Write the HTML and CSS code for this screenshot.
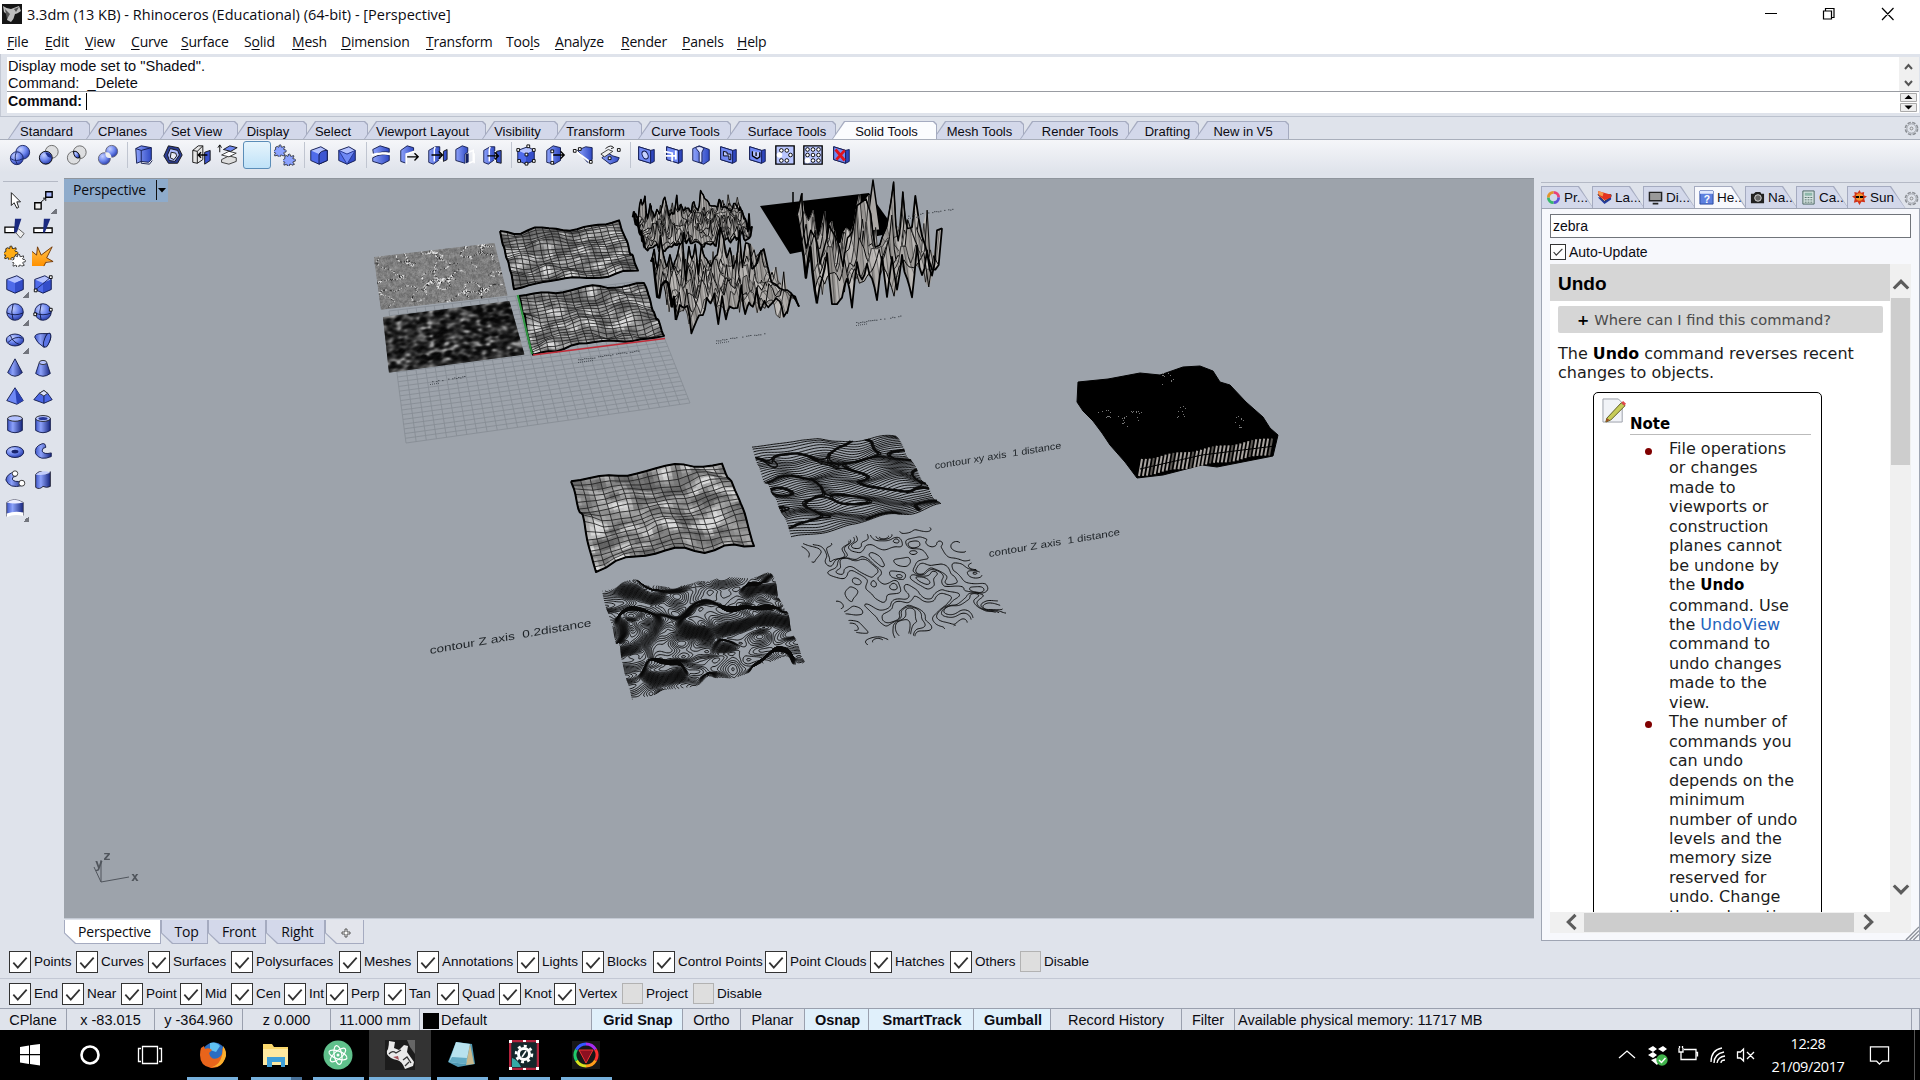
FILE: index.html
```html
<!DOCTYPE html>
<html lang="en">
<head>
<meta charset="utf-8">
<title>3.3dm (13 KB) - Rhinoceros (Educational) (64-bit) - [Perspective]</title>
<link rel="stylesheet" href="styles.css">
</head>
<body>
<svg class="sprite" aria-hidden="true">
  <defs>
    <radialGradient id="ball" cx=".35" cy=".3" r=".8"><stop offset="0" stop-color="#c3cfff"/><stop offset=".5" stop-color="#6d86ee"/><stop offset="1" stop-color="#1c2f9c"/></radialGradient>
    <linearGradient id="blue"><stop offset="0" stop-color="#8ea3fb"/><stop offset="1" stop-color="#2f49c4"/></linearGradient>
    <linearGradient id="tube"><stop offset="0" stop-color="#4058c8"/><stop offset=".35" stop-color="#8da2fa"/><stop offset="1" stop-color="#17267f"/></linearGradient>
    <linearGradient id="fire" x2="0" y2="1"><stop offset="0" stop-color="#ffc04a"/><stop offset="1" stop-color="#ff9100"/></linearGradient>
  </defs>
  <symbol id="cube" viewBox="0 0 24 24"><path d="M3 7 14 3l7 4v11l-9 4-9-4z" fill="#4f6bea"/><path d="M3 7 14 3l7 4-9 4z" fill="#b4c2ff"/><path d="M12 11v11l9-4V7z" fill="#344dc9"/><path d="M3 7 14 3l7 4v11l-9 4-9-4z" fill="none" stroke="#111a4a"/></symbol>
  <symbol id="plate" viewBox="0 0 24 24"><path d="M4 3l13 4 4-1v13l-4 2-13-4z" fill="#2e46bd" stroke="#10194f"/><path d="M4 3l13 4v14L4 17z" fill="#7189f3" stroke="#10194f"/></symbol>
  <symbol id="puzzle" viewBox="0 0 16 16"><path d="M2 4q2-2 4 0 1-1 0-2 2-2 3 0-1 2 1 2l3-1q1 2-1 3 0 2 2 1 2 1 1 3-2 0-3 1l2 3-3 1q-1-2-3-1-1 1 0 2-2 2-3 0 1-2-1-2l-3 1q-1-2 1-3 0-2-2-1-2-1-1-3 2 0 3-1z" stroke="#111" stroke-width=".9"/></symbol>
  <symbol id="box-slot" viewBox="0 0 24 24"><path d="M3 7l7-4h5v14l-7 5-5-2z" fill="url(#blue)" stroke="#111a4a"/><path d="M10 3l-1 3v13M15 8l5 2v9l-6-2" fill="none" stroke="#fff" stroke-width="1.6"/></symbol>
  <symbol id="arrow" viewBox="0 0 24 24"><path d="M10 12h12M18 8l4 4-4 4" fill="none" stroke="#000" stroke-width="1.5"/></symbol>
  <symbol id="gear" viewBox="0 0 16 16"><circle cx="8" cy="8" r="6.5" fill="none" stroke="#8c9096" stroke-width="1.7" stroke-dasharray="3.6 1.5"/><circle cx="8" cy="8" r="5" fill="none" stroke="#999da3"/><circle cx="8" cy="8" r="1.5" fill="none" stroke="#888"/></symbol>
</svg>

<header class="titlebar">
  <svg class="app-icon" viewBox="0 0 20 20"><rect width="20" height="20" fill="#151515"/><path d="M1 2q4 3 8 3l8-3 2 5q-4 3-6 3-1 5-4 8l-4-2 1-5-4-3z" fill="#bdbdbd"/><path d="M3 5l5 5-3 5zM12 5l5-2-3 5z" fill="#555"/></svg>
  <h1>3.3dm (13 KB) - Rhinoceros (Educational) (64-bit) - [Perspective]</h1>
  <svg class="window-controls" viewBox="0 0 150 28"><path d="M5 13.500h12M63.500 11h8v8h-8zM65.500 11V8.500h8.500v9h-2.500M122 8l11.500 12M133.500 8L122 20" fill="none" stroke="#000" stroke-width="1.2"/></svg>
</header>
<nav class="menubar">
  <span><u>F</u>ile</span><span><u>E</u>dit</span><span><u>V</u>iew</span><span><u>C</u>urve</span><span><u>S</u>urface</span><span>S<u>o</u>lid</span><span><u>M</u>esh</span><span><u>D</u>imension</span><span><u>T</u>ransform</span><span>Too<u>l</u>s</span><span><u>A</u>nalyze</span><span><u>R</u>ender</span><span><u>P</u>anels</span><span><u>H</u>elp</span>
</nav>
<section class="command">
  <div class="history"><p>Display mode set to "Shaded".<br>Command: &nbsp;_Delete</p>
    <svg viewBox="0 0 20 34"><path d="M6 12l3.500-4 3.500 4M6 24l3.500 4 3.500-4" fill="none" stroke="#555" stroke-width="2"/></svg></div>
  <div class="prompt"><p><b>Command:</b> <i></i></p>
    <svg viewBox="0 0 20 21"><path d="M1.500 1.500h16v8h-16zM1.500 11.500h16v8h-16z" fill="#eee" stroke="#aaa"/><path d="M9.500 3l4 4h-8zM9.500 17.500l4-4h-8z"/></svg></div>
</section>
<div class="tabstrip">
  <div class="tabs"><span>Standard</span><span>CPlanes</span><span>Set View</span><span>Display</span><span>Select</span><span>Viewport Layout</span><span>Visibility</span><span>Transform</span><span>Curve Tools</span><span>Surface Tools</span><span class="active">Solid Tools</span><span>Mesh Tools</span><span>Render Tools</span><span>Drafting</span><span>New in V5</span></div>
  <svg class="gear"><use href="#gear"/></svg>
</div>
<div class="toolbar">
  <svg viewBox="0 0 24 24"><circle cx="15" cy="9" r="7.500" fill="url(#ball)" stroke="#18245f"/><circle cx="8.500" cy="15.500" r="7" fill="url(#ball)" stroke="#18245f"/><path d="M2 16q6 4 13 0M8 9q-3 6 1 13" fill="none" stroke="#18245f"/></svg>
  <svg viewBox="0 0 24 24"><circle cx="15" cy="8.500" r="7" fill="#dddee0" stroke="#666"/><circle cx="8.500" cy="15" r="7" fill="url(#ball)" stroke="#000"/><path d="M15 15a7 7 0 01-7-6 7 7 0 017 6z" fill="#1e2f8e"/></svg>
  <svg viewBox="0 0 24 24"><circle cx="15" cy="9" r="7" fill="#dddee0" stroke="#666"/><circle cx="8.500" cy="15" r="7" fill="#dddee0" stroke="#666"/><path d="M8 8q6-1 7 7-6 2-7-7z" fill="url(#ball)" stroke="#000"/></svg>
  <svg viewBox="0 0 24 24"><circle cx="16" cy="8" r="6.500" fill="url(#ball)" stroke="#667"/><circle cx="8" cy="16" r="6.500" fill="url(#ball)" stroke="#667"/><path d="M9 9q6-1 7 6-7 2-7-6z" fill="#eee"/></svg>
  <svg viewBox="0 0 24 24"><path d="M3 5l6-3 11 2v13l-3 3-8-1-5 2z" fill="url(#blue)" stroke="#111a4a"/><path d="M3 5l6 2 11-3M9 7v14l9 1 3-4" fill="none" stroke="#111a4a"/></svg>
  <svg viewBox="0 0 24 24"><path d="M7 2l11 2 4 8-5 9H7l-5-8z" fill="#2c3d92" stroke="#111"/><path d="M9 5l8 2 2 5-5 7-6-1-2-6z" fill="#aebcff" stroke="#111"/><path d="M10 9l5 1 1 3-3 4-4-2z" fill="#e8eaf5" stroke="#111"/></svg>
  <svg viewBox="0 0 24 24"><path d="M3 7l6-5h5v15l-6 4-5-1zM3 7l5 1v13M8 8l6-6" fill="#e6e6e6" stroke="#111"/><path d="M16 9l6-2v11l-6 4z" fill="#3851cd" stroke="#111"/><path d="M19 12h-9M12 9l-3 3 3 3" fill="none" stroke="#000" stroke-width="1.500"/></svg>
  <svg viewBox="0 0 24 24"><path d="M5 17l8-4 8 2v4l-8 3-8-2z" fill="#ddd" stroke="#333"/><path d="M5 12l8-4 8 2-8 4z" fill="#fff" stroke="#333"/><path d="M7 6l7-4 8 2-7 4z" fill="#6e87f0" stroke="#111"/><path d="M3 9V1M1 4l2-3 2 3" stroke="#000" fill="none"/></svg>
  <svg class="hot" viewBox="0 0 28 28"></svg>
  <svg viewBox="0 0 24 24"><use href="#puzzle" width="14" height="14" x="0" y="0" fill="#8ba2ff"/><use href="#puzzle" width="14" height="14" x="10" y="10" fill="#8ba2ff"/></svg>
  <svg viewBox="0 0 24 24"><use href="#cube"/><path d="M12 22V12Q13 7 21 7v11z" fill="#3c56d2" stroke="#111a4a"/></svg>
  <svg viewBox="0 0 24 24"><use href="#cube"/><path d="M3 7l9 4 9-4-9 15z" fill="#6f89f5" stroke="#26378f"/></svg>
  <svg viewBox="0 0 24 24"><path d="M3 6l8-4 10 3v4q-7-2-17 3z" fill="url(#blue)" stroke="#111a4a"/><path d="M3 15q9-5 18-3v6l-8 4-10-3z" fill="url(#blue)" stroke="#111a4a"/><path d="M2 12q9-3 20-1" stroke="#fff" stroke-width="2.500" fill="none"/></svg>
  <svg viewBox="0 0 24 24"><path d="M3 7l7-5 7 2v4l-8 3v10l-6-2z" fill="url(#blue)" stroke="#111a4a"/><path d="M9 22V11l9-3" stroke="#fff" stroke-width="2" fill="none"/><use href="#arrow" y="2"/></svg>
  <svg viewBox="0 0 24 24"><use href="#box-slot"/><path d="M19 8l4-2v11l-4 2z" fill="#3650cb" stroke="#111"/><use href="#arrow" x="-4"/></svg>
  <svg viewBox="0 0 24 24"><path d="M2 6l7-4 6 2v5l-3 2v10l-10-3z" fill="url(#blue)" stroke="#111a4a"/><path d="M13 11l3-1v10l-3 1z" fill="#14205f"/><path d="M16 9l5-2v12l-5 2M22 10v11" stroke="#fff" stroke-width="1.600" fill="none"/></svg>
  <svg viewBox="0 0 24 24"><use href="#box-slot"/><path d="M17 8l5-1v14l-5-1z" fill="#3650cb" stroke="#111"/><use href="#arrow" x="-3" y="1"/></svg>
  <svg viewBox="0 0 24 24"><use href="#cube"/><path d="M2 5h3v3H2zM13 1h3v3h-3zM19 5h3v3h-3zM3 17h3v3H3zM11 20h3v3h-3zM19 17h3v3h-3zM11 10h3v3h-3z" fill="#fff" stroke="#000"/></svg>
  <svg viewBox="0 0 24 24"><path d="M3 7l7-5 8 2v14l-7 4-8-2z" fill="url(#blue)" stroke="#111a4a"/><path d="M9 8v12" stroke="#fff" stroke-width="2"/><path d="M7.500 6.500h3v3h-3zM7.500 19h3v3h-3z" fill="#fff" stroke="#000"/><use href="#arrow"/></svg>
  <svg viewBox="0 0 24 24"><path d="M6 7l9-4 7 1v13l-5 3z" fill="url(#blue)" stroke="#111a4a"/><path d="M3 7l16 12" stroke="#fff" stroke-width="2"/><path d="M1.500 6h3v3h-3zM7 4h3v3H7zM19 18h3v3h-3z" fill="#fff" stroke="#000"/></svg>
  <svg viewBox="0 0 24 24"><path d="M2 15l7-5 5 3 7 2-2 4-8 3z" fill="url(#blue)" stroke="#111a4a"/><path d="M1 11l8-5 5 2-9 6z" fill="#eee" stroke="#333"/><path d="M6 5q6-5 9-1M12 5l3-1" fill="none" stroke="#111"/><path d="M19 5h3v3h-3zM9 14h3v3H9z" fill="#fff" stroke="#000"/></svg>
  <svg viewBox="0 0 24 24"><use href="#plate"/><ellipse cx="11" cy="12" rx="3" ry="4.500" transform="rotate(-25 11 12)" fill="#c9d3ff" stroke="#10194f"/></svg>
  <svg viewBox="0 0 24 24"><use href="#plate"/><path d="M1 8l9 2v9M3 13h12M14 7v10" stroke="#fff" stroke-width="2" fill="none"/></svg>
  <svg viewBox="0 0 24 24"><path d="M3 5l7-3 11 4v12l-6 4-12-4z" fill="url(#blue)" stroke="#10194f"/><path d="M6 4q5-3 9 1l-2 4v11h-3V9z" fill="#dde3ff" stroke="#10194f"/></svg>
  <svg viewBox="0 0 24 24"><use href="#plate"/><path d="M7 8v5h6v4h2v-6h-4V9z" fill="#b8c4ff" stroke="#000"/></svg>
  <svg viewBox="0 0 24 24"><use href="#plate"/><path d="M7 8v5l5 3 3-2V9M11 9v4" fill="#b8c4ff" stroke="#000" stroke-width="1.400"/></svg>
  <svg viewBox="0 0 24 24"><path d="M2 2h20v20H2z" fill="#b9c6ff" stroke="#000" stroke-width="1.500"/><g fill="#fff" stroke="#000"><circle cx="8" cy="7" r="2"/><circle cx="14" cy="7" r="2"/><circle cx="18" cy="12" r="2"/><circle cx="8" cy="18" r="2"/><circle cx="14" cy="18" r="2"/></g><circle cx="6" cy="12" r="3" fill="#fff"/></svg>
  <svg viewBox="0 0 24 24"><path d="M2 2h20v20H2z" fill="#b9c6ff" stroke="#000" stroke-width="1.500"/><g fill="#fff" stroke="#000"><circle cx="6" cy="6" r="2"/><circle cx="12" cy="6" r="2"/><circle cx="18" cy="6" r="2"/><circle cx="6" cy="12" r="2"/><circle cx="12" cy="12" r="2"/><circle cx="18" cy="12" r="2"/><circle cx="12" cy="18" r="2"/><circle cx="18" cy="18" r="2"/></g><circle cx="6" cy="18" r="3" fill="#fff"/></svg>
  <svg viewBox="0 0 24 24"><use href="#plate"/><path d="M6 6l10 12M16 7L7 17" stroke="#e0121d" stroke-width="3"/></svg>
</div>

<main>
  <aside class="sidebar">
    <svg viewBox="0 0 24 24"><path d="M8 4v14l3-3 3 6 2-1-2-6h4z" fill="#fff" stroke="#111"/></svg>
    <svg viewBox="0 0 24 24" class="more"><path d="M3 15h7v7H3z" fill="#eee" stroke="#000" stroke-width="1.500"/><path d="M15 3h7v6h-7z" fill="#a9baff" stroke="#000" stroke-width="1.500"/><path d="M10 14l5-4M12 10h3v3" fill="none" stroke="#000"/></svg>
    <svg viewBox="0 0 24 24"><path d="M1 11h11v6H1z" fill="#fff" stroke="#000" stroke-width="1.400"/><path d="M12 16l4-3 6 5-4 5z" fill="#eee" stroke="#555"/><path d="M12 2h7l-5 15h-3z" fill="#1b2a80"/></svg>
    <svg viewBox="0 0 24 24"><path d="M2 12h20v5H2z" fill="#fff" stroke="#000" stroke-width="1.400"/><path d="M13 2h7l-6 15h-2z" fill="#1b2a80"/></svg>
    <svg viewBox="0 0 24 24"><use href="#puzzle" width="16" height="16" fill="#ffad16"/><use href="#puzzle" width="15" height="15" x="9" y="9" fill="#fff"/></svg>
    <svg viewBox="0 0 24 24"><path d="M0 7l5 4 1-9 4 9 12-9-6 12 7 4-7 0 -3 5H0z" fill="url(#fire)"/><path d="M0 7l5 4 1-9 4 9 12-9-6 12 7 4-8 1-2 4" fill="none" stroke="#6d3200"/></svg>
    <svg viewBox="0 0 24 24" class="more"><use href="#cube"/></svg>
    <svg viewBox="0 0 24 24"><use href="#cube"/><path d="M3 19L20 5" stroke="#1c2a70"/><path d="M2.500 17.500h3v3h-3zM19 3h3v3h-3z" fill="#fff" stroke="#000"/></svg>
    <svg viewBox="0 0 24 24" class="more"><circle cx="12" cy="12" r="9" fill="url(#ball)" stroke="#111a4a"/><path d="M3 13q9 4 18 0M10 3q-3 9 0 18" fill="none" stroke="#111a4a"/></svg>
    <svg viewBox="0 0 24 24"><circle cx="12" cy="12" r="9" fill="url(#ball)" stroke="#111a4a"/><path d="M3 13q9 4 18 0M10 3q-3 9 0 18" fill="none" stroke="#111a4a"/><path d="M2 13h3v3H2zM19 8h3v3h-3z" fill="#fff" stroke="#000"/></svg>
    <svg viewBox="0 0 24 24" class="more"><ellipse cx="12" cy="12" rx="9.500" ry="6.500" fill="url(#ball)" stroke="#111a4a"/><path d="M4 15q8-8 16-5M7 7q2 7 10 10" fill="none" stroke="#111a4a"/></svg>
    <svg viewBox="0 0 24 24"><path d="M3 9q0-4 8-4l8 0q3 3 0 9-2 5-6 6Q5 15 3 9z" fill="url(#tube)" stroke="#111a4a"/><ellipse cx="16.500" cy="12" rx="3" ry="8" transform="rotate(20 16 12)" fill="#5b75e5" stroke="#111a4a"/></svg>
    <svg viewBox="0 0 24 24"><path d="M12 2l8 15q-8 8-16 0z" fill="url(#tube)" stroke="#111a4a"/></svg>
    <svg viewBox="0 0 24 24"><path d="M8 6q4-4 8 0l4 12q-8 6-16 0z" fill="url(#tube)" stroke="#111a4a"/><ellipse cx="12" cy="6" rx="4" ry="2.300" fill="#b4c2ff" stroke="#333"/></svg>
    <svg viewBox="0 0 24 24"><path d="M12 3l9 14-7 4-11-4z" fill="#6f89f5" stroke="#111a4a"/><path d="M12 3l9 14-7 4z" fill="#2b42b5"/></svg>
    <svg viewBox="0 0 24 24"><path d="M8 9l5-3 4 3 5 7-9 4-11-4z" fill="#4c68e6" stroke="#111a4a"/><path d="M8 9l5-3 4 3-4 3z" fill="#dbe2ff" stroke="#333"/><path d="M13 12v8" stroke="#111a4a"/></svg>
    <svg viewBox="0 0 24 24"><path d="M4 6v13q8 5 16 0V6z" fill="url(#tube)" stroke="#111a4a"/><ellipse cx="12" cy="6" rx="8" ry="3" fill="#b4c2ff" stroke="#222"/></svg>
    <svg viewBox="0 0 24 24"><path d="M4 6v13q8 5 16 0V6z" fill="url(#tube)" stroke="#111a4a"/><ellipse cx="12" cy="6" rx="8" ry="3.200" fill="#b4c2ff" stroke="#222"/><ellipse cx="12" cy="6" rx="5" ry="1.700" fill="#26379b"/></svg>
    <svg viewBox="0 0 24 24"><ellipse cx="12" cy="12" rx="9.500" ry="6" fill="url(#ball)" stroke="#111a4a"/><ellipse cx="12" cy="11.500" rx="3.800" ry="2" fill="#17246e"/></svg>
    <svg viewBox="0 0 24 24"><path d="M11 3q-9 3-7 11 5 8 17 3v-4q-8 2-10-2 0-4 4-4 0-5-4-4z" fill="url(#tube)" stroke="#111a4a"/></svg>
    <svg viewBox="0 0 24 24"><path d="M12 3q-9 2-10 9 4 10 18 6v-5q-9 2-11-2 0-3 4-3z" fill="url(#tube)" stroke="#111a4a"/><circle cx="12" cy="5" r="3" fill="#fff" stroke="#333"/><circle cx="19.500" cy="15.500" r="3.200" fill="#fff" stroke="#333"/></svg>
    <svg viewBox="0 0 24 24"><path d="M4 6q4-5 8-2t8-1v16q-4 2-8 0-4 4-8 1z" fill="url(#tube)" stroke="#223"/><path d="M4 6q8 2 16-2-9-4-16 2z" fill="#c3cdfb"/></svg>
    <svg viewBox="0 0 24 24" class="more"><path d="M3 6q8-6 18 0v14q-9-5-18 1z" fill="url(#tube)" stroke="#445"/><path d="M3 6q8-6 18 0-9 2-18 0z" fill="#eef"/><path d="M3 18q9-3 18-1v4q-9-3-18 1z" fill="#fff"/></svg>
  </aside>

  <section class="stage">
    <div class="viewport">
      <canvas id="scene" width="1470" height="740"></canvas>
      <svg class="labels" viewBox="64 178 1470 740">
        <g fill="#1d2226">
          <text transform="translate(935 468) rotate(-9.200) skewX(-6)" textLength="128" lengthAdjust="spacingAndGlyphs" font-size="9.500" xml:space="preserve">contour xy axis &#160;1 distance</text>
          <text transform="translate(989 556) rotate(-9.500) skewX(-6)" textLength="133" lengthAdjust="spacingAndGlyphs" font-size="9.500" xml:space="preserve">contour Z axis &#160;1 distance</text>
          <text transform="translate(430 653) rotate(-9.800) skewX(-6)" textLength="164" lengthAdjust="spacingAndGlyphs" font-size="10.500" xml:space="preserve">contour Z axis &#160;0.2distance</text>
        </g>
        <g class="axes"><path d="M101 881V859M101 881l-7-15M101 881l28-5" stroke="#50555c" fill="none"/><text x="103" y="859">z</text><text x="95" y="867">y</text><text x="131" y="880">x</text></g>
      </svg>
      <div class="view-title"><span>Perspective</span><svg viewBox="0 0 12 22"><path d="M.5 1v20" stroke="#111"/><path d="M2 9h8l-4 4.500z"/></svg></div>
    </div>
    <div class="view-tabs"><span class="active">Perspective</span><span>Top</span><span>Front</span><span>Right</span><span class="add"><svg viewBox="0 0 10 10"><path d="M4 1h2v3h3v2H6v3H4V6H1V4h3z" fill="#fff" stroke="#555"/></svg></span></div>
  </section>

  <aside class="panel">
    <div class="panel-tabs">
      <span><svg viewBox="0 0 16 16"><g fill="none" stroke-width="3"><path d="M8 2.500a5.500 5.500 0 015.500 5.500" stroke="#e8407a"/><path d="M13.500 8A5.500 5.500 0 018 13.500" stroke="#5a52d8"/><path d="M8 13.500A5.500 5.500 0 012.500 8" stroke="#35b86c"/><path d="M2.500 8A5.500 5.500 0 018 2.500" stroke="#e3942b"/></g></svg>Pr...</span>
      <span><svg viewBox="0 0 16 16"><path d="M1 8l7 7 7-5V6z" fill="#223a9d"/><path d="M1 5l7 7 7-5V5z" fill="#fff" stroke="#333"/><path d="M1 1l14 4v3l-7 3-6-5z" fill="#e4321f"/><path d="M1 1l6 2-1 4-4-2z" fill="#f69a4d"/></svg>La...</span>
      <span><svg viewBox="0 0 16 16"><path d="M1.500 2.500h13v9h-13z" fill="#999" stroke="#222" stroke-width="1.500"/><path d="M5 14.500h6" stroke="#222" stroke-width="2"/></svg>Di...</span>
      <span class="active"><svg viewBox="0 0 16 16"><path d="M1 1h14v14H1z" fill="#5d80df" stroke="#27479e"/><path d="M1 1h14v3H1z" fill="#dfe8ff"/><text x="5" y="14" font-size="11" font-weight="700" fill="#fff">?</text></svg>He...</span>
      <span><svg viewBox="0 0 16 16"><path d="M1 4h3l2-2h5l1 2h3v10H1z" fill="#222"/><circle cx="8.500" cy="8.500" r="3.500" fill="#666" stroke="#ddd"/></svg>Na...</span>
      <span><svg viewBox="0 0 16 16"><path d="M2 1h12v14H2z" fill="#d5e3e1" stroke="#48635f"/><path d="M4 3h8v3H4z" fill="#8eb8ab"/><path d="M4 8h8M4 10.500h8M4 13h8" stroke="#55716c" stroke-dasharray="2 1"/></svg>Ca...</span>
      <span><svg viewBox="0 0 16 16"><path d="M8 0l1.500 3L13 2l-.5 3.500L16 7l-3 2 1 4-4-.5L8 16l-2-3.500-4 1L3 9 0 7l3-1.500L2.500 2 6 3z" fill="#d1341b"/><circle cx="8" cy="7.500" r="4" fill="#f7902a"/><path d="M4 6.500h3.500v2H4zM8.500 6.500H12v2H8.500z"/></svg>Sun</span>
      <svg class="gear"><use href="#gear"/></svg>
    </div>
    <div class="panel-body">
      <div class="search">zebra</div>
      <label class="auto"><svg class="check" viewBox="0 0 16 16"><path d="M3 8l3 3.500L13 4.500" fill="none" stroke="#333" stroke-width="1.300"/></svg>Auto-Update</label>
      <div class="browser">
        <article class="help">
          <h2>Undo</h2>
          <div class="where"><b>+</b>Where can I find this command?</div>
          <p class="intro">The <b>Undo</b> command reverses recent<br>changes to objects.</p>
          <div class="note">
            <h3><svg viewBox="0 0 26 26"><path d="M1 1h16l4 4v20H1z" fill="#f1f3f7" stroke="#9a9fa8"/><path d="M5 21L20 5l4 3L9 23l-5 2z" fill="#c7cc58" stroke="#5d5b22"/><path d="M20 5l2-2 3 3-2 2z" fill="#df4a4a"/><path d="M4 25l1-4 3 2z" fill="#a34d1f"/></svg><span>Note</span></h3>
            <ul>
              <li>File operations<br>or changes<br>made to<br>viewports or<br>construction<br>planes cannot<br>be undone by<br>the <b>Undo</b><br>command. Use<br>the <a>UndoView</a><br>command to<br>undo changes<br>made to the<br>view.</li>
              <li>The number of<br>commands you<br>can undo<br>depends on the<br>minimum<br>number of undo<br>levels and the<br>memory size<br>reserved for<br>undo. Change<br>the undo options</li>
            </ul>
          </div>
        </article>
        <div class="vscroll"><svg viewBox="0 0 20 14"><path d="M2 12l8-8 8 8" /></svg><i></i><svg viewBox="0 0 20 14"><path d="M2 2l8 8 8-8"/></svg></div>
        <div class="hscroll"><svg viewBox="0 0 14 20"><path d="M12 2L4 10l8 8"/></svg><i></i><svg viewBox="0 0 14 20"><path d="M2 2l8 8-8 8"/></svg></div>
      </div>
      <svg class="grip" viewBox="0 0 16 16"><path d="M2 16L16 2M6 16L16 6M10 16l6-6" stroke="#8b8f98" stroke-width="1.500"/></svg>
    </div>
  </aside>
</main>

<div class="checks filters">
  <label>Points</label><label>Curves</label><label>Surfaces</label><label>Polysurfaces</label><label>Meshes</label><label>Annotations</label><label>Lights</label><label>Blocks</label><label>Control Points</label><label>Point Clouds</label><label>Hatches</label><label>Others</label><label class="off">Disable</label>
</div>
<div class="checks snaps">
  <label>End</label><label>Near</label><label>Point</label><label>Mid</label><label>Cen</label><label>Int</label><label>Perp</label><label>Tan</label><label>Quad</label><label>Knot</label><label>Vertex</label><label class="off">Project</label><label class="off">Disable</label>
</div>
<div class="status">
  <span>CPlane</span><span>x -83.015</span><span>y -364.960</span><span>z 0.000</span><span>11.000 mm</span><span class="layer"><i></i>Default</span><b>Grid Snap</b><span>Ortho</span><span>Planar</span><b>Osnap</b><b>SmartTrack</b><b>Gumball</b><span>Record History</span><span>Filter</span><span class="memory">Available physical memory: 11717 MB</span><span></span>
</div>
<footer class="taskbar">
  <div class="launch">
    <div><svg viewBox="0 0 30 30"><path d="M5 7l9-1.500V14H5zM15 5.300L25 4v10H15zM5 15.300h9V24l-9-1.500zM15 15.300h10V25.500L15 24z" fill="#fff"/></svg></div>
    <div><svg viewBox="0 0 30 30"><circle cx="15" cy="15" r="8.500" fill="none" stroke="#fff" stroke-width="2.600"/></svg></div>
    <div><svg viewBox="0 0 30 30"><path d="M7.500 6.500h15v17h-15zM6 8.500H3.500v13H6M24 8.500h2.500v13H24" fill="none" stroke="#fff" stroke-width="1.300"/></svg></div>
    <div class="run"><svg viewBox="0 0 30 30"><circle cx="16" cy="14" r="11.500" fill="#2b6dc0"/><path d="M12 3q6-2 10 3l-4 6-6-2z" fill="#5fc0f2"/><path d="M3 8l3-2 1 3q4-2 7 1l-3 3q2 8 9 5 6-3 4-10 4 4 3 9-3 12-14 11Q2 26 2 15q0-4 1-7z" fill="#e8641b"/><path d="M25 6q5 6 2 13-4 9-13 8 11-3 11-21z" fill="#fbb02e"/></svg></div>
    <div class="run multi"><svg viewBox="0 0 30 30"><path d="M2 4h9l2 3h14v18H2z" fill="#fbd86c"/><path d="M2 9h25v16H2z" fill="#ffe9a0"/><path d="M6 27V17h18v10h-4v-5h-9v5z" fill="#3f9fd8"/></svg></div>
    <div class="run"><svg viewBox="0 0 30 30"><circle cx="15" cy="15" r="14.500" fill="#5fc08b"/><g fill="none" stroke="#fff" stroke-width="1.200"><ellipse cx="15" cy="15" rx="9.500" ry="3.800" transform="rotate(20 15 15)"/><ellipse cx="15" cy="15" rx="9.500" ry="3.800" transform="rotate(80 15 15)"/><ellipse cx="15" cy="15" rx="9.500" ry="3.800" transform="rotate(140 15 15)"/></g><circle cx="15" cy="15" r="1.500" fill="#fff"/></svg></div>
    <div class="run current"><svg viewBox="0 0 30 30"><path d="M0 0h30v30H0z" fill="#1c1c1c"/><path d="M4 1l6 1-1 6 5 2 5-5 4 1-1 6 7 10-1 4-8 3q-3-8-8-9-7-1-10-6-1-3 1-5 1-4 1-8z" fill="#e9e9e9"/><path d="M4 14q3-4 7-1l5-3M18 20l4-3 4 6M20 26l4-4" stroke="#333" stroke-width="1.300" fill="none"/><path d="M8 17l6 3-1-4z" fill="#a5545c"/><path d="M22 0h8v14l-5-7z" fill="#666"/></svg></div>
    <div class="run"><svg viewBox="0 0 30 30"><path d="M9 2l16 2 3 20-17 3-10-5z" fill="#4f98b3"/><path d="M9 2l14 2-4 20-17-2z" fill="#b8e2ee"/><path d="M23 4l4 20-8 1z" fill="#c9b98d"/><path d="M5 17l15 1-1 6-17-2z" fill="#64abc4"/></svg></div>
    <div class="run"><svg viewBox="0 0 30 30"><path d="M1 1h28v28H1z" fill="#14272b" stroke="#b3223c" stroke-width="2.500"/><path d="M0 0h3v3H0zM27 0h3v3h-3zM0 27h3v3H0zM27 27h3v3h-3zM14 0h3v2h-3zM14 28h3v2h-3z" fill="#fff"/><path d="M3 18q6 2 9 9H3z" fill="#34a9a5"/><circle cx="15" cy="14" r="5.500" fill="none" stroke="#fff" stroke-width="3"/><circle cx="15" cy="14" r="8" fill="none" stroke="#fff" stroke-width="2.500" stroke-dasharray="3 3.200"/><path d="M13 17l4-6" stroke="#fff" stroke-width="1.500"/></svg></div>
    <div class="run"><svg viewBox="0 0 30 30"><path d="M1 1h28v28H1z" fill="#171717"/><g fill="none" stroke-width="3"><path d="M15 4a11 11 0 019.500 5.500" stroke="#a52cf0"/><path d="M24.500 9.500a11 11 0 010 11" stroke="#ff3030"/><path d="M24.500 20.500A11 11 0 0115 26" stroke="#ff9c1a"/><path d="M15 26a11 11 0 01-9.500-5.500" stroke="#d7e21e"/><path d="M5.500 20.500a11 11 0 010-11" stroke="#20c96a"/><path d="M5.500 9.500A11 11 0 0115 4" stroke="#3557ff"/></g><path d="M8 10h14l-7 13z" fill="#8c1020" stroke="#e33"/></svg></div>
  </div>
  <svg class="tray" viewBox="0 0 150 30"><g fill="none" stroke="#fff" stroke-width="1.300"><path d="M9 18l8-7 8 7"/><path d="M74 9.500h12v10H71v-5M86 12.500h1.500v4M69 8v4h4V8M71 12v3M69.500 6v2M72.500 6v2"/><path d="M101 22Q101 10 112 8M104 23q0-9 10-11M107 23q1-6 8-7M111 23q0-3 4-3"/><path d="M127.500 12h3l3-3v12l-3-3h-3zM137 12l7 7M144 12l-7 7"/></g><g fill="#fff"><path d="M38 9l5-3 4 3-4 3zM48 9l5-3 4 3-4 3zM38 15l5-3 4 3-4 3zM41 20l5-2 4 3-3 4z"/></g><circle cx="52" cy="20" r="5.700" fill="#3fb24a"/><path d="M49 20l2.500 2.500L55.500 18" stroke="#fff" stroke-width="1.500" fill="none"/></svg>
  <div class="clock">12:28<br>21/09/2017</div>
  <svg class="notify" viewBox="0 0 22 22"><path d="M1.500 2h19v15h-6.500l-3 3-3-3H1.500z" fill="none" stroke="#fff" stroke-width="1.300"/></svg>
  <i class="desk"></i>
</footer>
<script src="scene.js"></script>
</body>
</html>
```
FILE: styles.css
```css
* { box-sizing: border-box; }
body { margin: 0; width: 1920px; height: 1080px; overflow: hidden; display: flex; flex-direction: column; background: #dfe3eb; color: #0b0b12; font: 13px/16px "Liberation Sans", Arial, sans-serif; }
p, h1, h2, h3, ul { margin: 0; padding: 0; font-weight: normal; }
svg { display: block; flex: none; }
.sprite { position: absolute; width: 0; height: 0; }

.titlebar { height: 28px; background: #fff; display: flex; align-items: center; padding-left: 2px; }
.app-icon { width: 20px; height: 20px; margin-right: 5px; }
.titlebar h1 { font: 14.5px/29px "Open Sans", "Noto Sans", sans-serif; white-space: nowrap; }
.window-controls { width: 150px; height: 28px; margin-left: auto; margin-right: 10px; }

.menubar { height: 26px; background: #fff; display: grid; grid-template-columns: 38px 40px 46px 50px 63px 48px 49px 85px 80px 49px 66px 61px 55px 50px; padding-left: 7px; font: 14px/27px "Open Sans", "Noto Sans", sans-serif; letter-spacing: -.2px; }
.menubar u { text-underline-offset: 2px; }

.command { height: 62px; padding: 3px 1px 3px 6px; border-left: 1px solid #c4c9d4; font-size: 14.6px; line-height: 17px; }
.history { height: 35px; background: #fff; border-bottom: 1px solid #999ca2; display: flex; justify-content: space-between; padding-left: 1px; }
.history p { padding-top: 1px; }
.history svg { width: 20px; height: 34px; background: #f0f0f0; }
.prompt { height: 21px; background: #fff; display: flex; justify-content: space-between; padding-left: 1px; font-size: 14.2px; }
.prompt p { display: flex; align-items: center; gap: 4px; height: 18px; }
.prompt i { width: 1px; height: 17px; background: #000; }
.prompt svg { width: 20px; height: 21px; }

.tabstrip { height: 23px; border-top: 1px solid #bcc2ce; display: flex; justify-content: space-between; align-items: flex-end; padding: 0 1px 0 8px; }
.tabs { display: grid; grid-template-columns: 78px 74px 74px 69px 61px 118px 72px 84px 89px 105px 101px 87px 105px 70px 90px; }
.tabs span { position: relative; z-index: 0; height: 18px; line-height: 21px; text-align: center; padding-left: 2px; white-space: nowrap; width: calc(100% + 4px); clip-path: polygon(0 100%, 12px 0, calc(100% - 3px) 0, 100% 3px, 100% 100%); background: #a5abc0; }
.tabs span::before { content: ""; position: absolute; z-index: -1; inset: 1px 1px 0 1px; clip-path: polygon(0 100%, 12px 0, calc(100% - 3px) 0, 100% 3px, 100% 100%); background: #d3d8ea; }
.tabs span:nth-child(-n+8) { padding: 0 5px 0 0; }
.tabs span:nth-child(10), .tabs span:nth-child(13), .tabs span:nth-child(14) { padding-left: 11px; }
.tabs .active { z-index: 1; padding-left: 4px; }
.tabs .active::before { background: #fbfcfe; }
.gear { width: 15px; height: 15px; margin-bottom: 3px; }

.toolbar { height: 39px; border-top: 1px solid #a9afbb; background: linear-gradient(#f5f6f9, #dfe3eb 85%); padding: 1px 0 0 6px; display: grid; grid-template-columns: 28px 29px 28px 39px 28px 29px 27px 28.500px 28.500px 34px 27px 35px 27px 29px 28px 28px 32px 30px 28px 28px 34px 29px 27px 27px 28px 29px 28px 28px 28px; justify-items: center; align-items: start; }
.toolbar svg { width: 22px; height: 22px; margin-top: 3px; }
.toolbar .hot { width: 28px; height: 28px; margin-top: 0; border: 1px solid #5b8db8; border-radius: 3px; background: linear-gradient(#e6f4fc, #bfe2f8); }
.toolbar svg:nth-child(4), .toolbar svg:nth-child(10), .toolbar svg:nth-child(12), .toolbar svg:nth-child(17), .toolbar svg:nth-child(21) { width: 31px; padding-right: 8px; border-right: 1px solid #c0c5d0; height: 26px; padding-bottom: 2px; padding-top: 2px; margin-top: 1px; margin-left: 3px; }

main { height: 767px; display: flex; }
.sidebar { width: 64px; padding: 8px 0 0; display: grid; grid-template-columns: 28px 28px; grid-auto-rows: 28px; justify-items: center; align-content: start; background: linear-gradient(#b4b9c5, #b4b9c5) 3px 3px / 55px 1px no-repeat; }
.sidebar svg { width: 22px; height: 22px; margin-top: 3px; margin-left: 1px; }
.sidebar .more { width: 28px; height: 28px; margin: 0 -2px 0 0; padding: 3px 3px; background: linear-gradient(135deg, transparent 50%, #72757d 50%) 100% 100% / 6px 6px no-repeat; }
.stage { width: 1470px; }
.viewport { position: relative; width: 1470px; height: 740px; background: #9da3ab; border-top: 1px solid #8f959d; overflow: hidden; }
.viewport canvas, .labels { position: absolute; left: 0; top: 0; width: 1470px; height: 740px; }
.labels { font-family: "Liberation Sans", Arial, sans-serif; }
.axes { fill: #50555c; font: bold 13px "DejaVu Sans Mono", monospace; }
.view-title { position: absolute; left: 0; top: 0; width: 104px; height: 23px; background: #8eabcb; display: flex; padding-left: 9px; font: 14px/22px "Open Sans", sans-serif; letter-spacing: -.2px; }
.view-title span { width: 84px; }
.view-title svg { width: 12px; height: 22px; }

.view-tabs { display: grid; grid-template-columns: 97px 47px 58px 59px 39px; height: 26px; padding-top: 1px; font: 14px/24px "Open Sans", sans-serif; letter-spacing: -.2px; border-top: 1px solid #c4cad4; }
.view-tabs span { position: relative; z-index: 0; height: 24px; padding-left: 4px; text-align: center; background: #a5abc0; clip-path: polygon(0 0, 100% 0, 100% 100%, 11px 100%, 0 55%); }
.view-tabs span::before { content: ""; position: absolute; z-index: -1; inset: 0 1px 1px 0; background: #d3d8ea; clip-path: polygon(0 0, 100% 0, 100% 100%, 12px 100%, 1px 55%, 1px 0); }
.view-tabs .active::before { background: #fff; }
.view-tabs .add::before { background: #e3e5ec; }
.view-tabs .add svg { width: 10px; height: 10px; margin: 8px auto 0 12px; }

.panel { width: 386px; padding: 8px 0 0 7px; background: linear-gradient(#b4b9c5, #b4b9c5) 7px 4px / 379px 1px no-repeat; }
.panel-tabs { height: 22px; display: grid; grid-template-columns: 51px 51px 51px 51px 51px 51px 57px 15px; font-size: 13.5px; line-height: 21px; }
.panel-tabs span { position: relative; z-index: 0; display: flex; align-items: center; gap: 3px; padding-left: 5px; padding-bottom: 1px; width: calc(100% + 2px); white-space: nowrap; background: #a5abc0; clip-path: polygon(0 100%, 0 0, calc(100% - 15px) 0, 100% 100%); }
.panel-tabs span::before { content: ""; position: absolute; z-index: -1; inset: 1px 1px 1px 1px; background: #d3d8ea; clip-path: polygon(0 100%, 0 0, calc(100% - 15px) 0, 100% 100%); }
.panel-tabs .active::before { background: #f8f9fd; bottom: 0; }
.panel-tabs span svg { width: 15px; height: 15px; }
.panel-tabs .gear { margin-top: 5px; }
.panel-body { position: relative; height: 733px; border: 1px solid #9fa5b3; background: #f7f8fc; padding: 5px 8px 8px; }
.search { width: 361px; height: 24px; border: 1px solid #70747a; background: #fff; padding-left: 2px; font-size: 14px; line-height: 22px; }
.auto { display: flex; align-items: center; gap: 3px; height: 16px; margin-top: 6px; font-size: 14px; }
.check { width: 16px; height: 16px; border: 1px solid #333; background: #fff; }
.browser { margin-top: 4px; width: 361px; height: 669px; display: grid; grid-template: 648px 20px / 340px 21px; background: #f0f0f0; }
.help { background: #fff; overflow: hidden; font: 16px/19.45px "DejaVu Sans", Verdana, sans-serif; color: #1c1c1c; }
.help h2 { height: 37px; background: #d6d6d6; padding-left: 8px; font: bold 19px/39px "Liberation Sans", Arial, sans-serif; color: #000; }
.where { margin: 5px 7px 0 8px; height: 27px; border-radius: 2px; background: #d6d6d6; font-size: 14.650px; line-height: 28px; color: #4a4a4a; padding-left: 19px; display: flex; gap: 5px; white-space: nowrap; }
.where b { color: #000; }
.intro { margin: 11px 0 0 8px; white-space: nowrap; }
.help b { color: #000; font-weight: bold; }
.intro b { font-size: 15.800px; }
.note b { font-size: 15px; }
.note { margin: 9px 0 0 43px; width: 229px; height: 560px; border: 1px solid #000; border-radius: 5px; padding: 5px 10px 0 8px; }
.note h3 { display: flex; gap: 3px; height: 37px; margin-bottom: 4px; }
.note h3 svg { width: 25px; height: 25px; }
.note h3 span { flex: 1; border-bottom: 1px solid #bbb; padding-top: 17px; font-weight: bold; font-size: 15px; color: #000; }
.note ul { list-style: none; padding-left: 67px; white-space: nowrap; }
.note li { position: relative; }
.note li::before { content: ""; position: absolute; left: -24px; top: 9px; width: 7px; height: 7px; border-radius: 50%; background: #800000; }
.note a { color: #2464bd; }
.vscroll, .hscroll { display: flex; align-items: center; }
.vscroll { flex-direction: column; padding: 13px 1px 15px; }
.vscroll svg { width: 18px; height: 14px; }
.vscroll i { width: 19px; height: 167px; margin: 7px 0 auto; background: #cdcdcd; }
.hscroll { grid-column: 1 / 3; padding-left: 14px; }
.hscroll svg { width: 14px; height: 18px; }
.hscroll i { width: 270px; height: 19px; margin: 0 8px 0 6px; background: #cdcdcd; }
.vscroll path, .hscroll path { fill: none; stroke: #5c5c5c; stroke-width: 3.500; }
.grip { position: absolute; right: 0; bottom: 0; width: 15px; height: 15px; }

.checks { display: grid; font-size: 13.500px; padding-left: 9px; align-items: center; white-space: nowrap; }
.filters { height: 34px; grid-template-columns: 67px 72px 83px 108px 78px 100px 65px 71px 112px 105px 80px 70px 80px; border-bottom: 1px solid #c3c8d4; }
.snaps { height: 29px; grid-template-columns: 53px 59px 59px 51px 53px 42px 58px 53px 62px 55px 68px 71px 80px; }
.checks label { display: flex; align-items: center; gap: 3px; }
.checks label::before { content: ""; flex: none; width: 20px; height: 20px; border: 1px solid #333; background: #fff url("data:image/svg+xml,%3Csvg xmlns='http://www.w3.org/2000/svg' viewBox='0 0 18 18'%3E%3Cpath d='M3 9.500l4 4.500L15 5' fill='none' stroke='%23333' stroke-width='1.600'/%3E%3C/svg%3E"); }
.checks .off::before { width: 19px; height: 19px; border-color: #b2b2b2; background: #dedede; }

.status { height: 22px; border-top: 1px solid #9aa0ae; display: grid; grid-template-columns: 67px 88px 88px 88px 89px 172px 91px 58px 64px 64px 105px 77px 131px 53px 677px 8px; font-size: 14.5px; line-height: 22px; text-align: center; white-space: nowrap; }
.status > * { border-right: 1px solid #9aa0ae; height: 21px; }
.status b { background: #e0f0fb; padding-left: 2px; }
.status .layer { display: flex; align-items: center; padding-left: 3px; gap: 2px; }
.layer i { width: 16px; height: 16px; background: #000; margin-top: 2px; }
.status .memory { text-align: left; padding-left: 3px; }

.taskbar { height: 50px; background: #000; display: flex; color: #fff; align-items: center; }
.launch { height: 50px; display: grid; grid-template-columns: 60px 60px 60px 65px repeat(6, 62px); }
.launch div { display: flex; align-items: center; justify-content: center; border-bottom: 3px solid transparent; }
.launch svg { width: 30px; height: 30px; margin-top: 3px; }
.launch .run { background: linear-gradient(#76b0dc, #76b0dc) 50% 100% / 51px 3px no-repeat border-box; }
.launch .multi { background: linear-gradient(90deg, #76b0dc 79%, #476f96 79%) 50% 100% / 51px 3px no-repeat border-box; }
.launch .current { background: linear-gradient(#333, #333) padding-box, #76b0dc border-box; border-bottom-color: #76b0dc; }
.tray { width: 150px; height: 30px; margin-left: 993px; }
.clock { width: 90px; margin-left: 3px; text-align: center; font: 14.500px/23px "Open Sans", sans-serif; letter-spacing: -.4px; }
.notify { width: 21px; height: 21px; margin: 0 0 0 16px; }
.desk { width: 1px; height: 50px; background: #555; margin-left: auto; margin-right: 5px; }
```
FILE: scene.js
```js
(function () {
  const ctx = document.getElementById('scene').getContext('2d');
  ctx.translate(-64, -179);
  ctx.lineJoin = 'round';

  let state = 7;
  const rnd = () => { state = (state * 1664525 + 1013904223) >>> 0; return state / 4294967296; };
  const hash = (x, y, s) => {
    let n = Math.imul(x, 374761393) + Math.imul(y, 668265263) + Math.imul(s, 144665);
    n = Math.imul(n ^ (n >>> 13), 1274126177);
    return ((n ^ (n >>> 16)) >>> 0) / 4294967296;
  };
  const noise = (x, y, s) => {
    const i = Math.floor(x), j = Math.floor(y);
    let a = x - i, b = y - j;
    a = a * a * (3 - 2 * a); b = b * b * (3 - 2 * b);
    return (hash(i, j, s) * (1 - a) + hash(i + 1, j, s) * a) * (1 - b) + (hash(i, j + 1, s) * (1 - a) + hash(i + 1, j + 1, s) * a) * b;
  };
  // two lattices at different angles hide the square cells of the value noise
  const smooth = (x, y, s) => {
    const n = noise(x, y, s) + noise(x * .7 + y * .7 + 31, y * .7 - x * .7 + 17, s + 1);
    return Math.max(0, Math.min(1, (n / 2 - .5) * 1.4 + .5));
  };
  // corners: top-left, top-right, bottom-right, bottom-left
  const at = (q, u, v) => [
    (q[0] * (1 - u) + q[2] * u) * (1 - v) + (q[6] * (1 - u) + q[4] * u) * v,
    (q[1] * (1 - u) + q[3] * u) * (1 - v) + (q[7] * (1 - u) + q[5] * u) * v
  ];
  const poly = (pts, fill, stroke, w) => {
    ctx.beginPath();
    pts.forEach((p, k) => k ? ctx.lineTo(p[0], p[1]) : ctx.moveTo(p[0], p[1]));
    if (fill) { ctx.closePath(); ctx.fillStyle = fill; ctx.fill(); }
    if (stroke) { ctx.strokeStyle = stroke; ctx.lineWidth = w || 1; ctx.stroke(); }
  };

  function grid(q, n) {
    for (let i = 0; i <= n; i++) {
      poly([at(q, i / n, 0), at(q, i / n, 1)], null, '#858b93', .8);
      poly([at(q, 0, i / n), at(q, 1, i / n)], null, '#858b93', .8);
    }
  }
  function texture(q, shade) {
    for (let i = 0; i < 132; i++) for (let j = 0; j < 64; j++) {
      const p = at(q, i / 132, j / 64), g = shade(i, j) | 0;
      ctx.fillStyle = `rgb(${g},${g},${g})`;
      ctx.fillRect(p[0], p[1], 1.5, 1.4);
    }
  }
  function mesh(q, n, m, amp, freq, seed) {
    const h = (u, v) => (smooth(u * freq, v * freq, seed) - .5) * amp;
    const pt = (i, j) => { const p = at(q, i / n, j / m); p[1] -= h(i / n, j / m); return p; };
    // shade the terrain in half cells, then lay the wires over it
    for (let j = 0; j < m * 2; j++) for (let i = 0; i < n * 2; i++) {
      const x = i / 2, y = j / 2, s = smooth(i * .42, j * .4, seed + 50);
      const g = Math.max(92, Math.min(220, 98 + Math.pow(s, 1.6) * 150)) | 0;
      poly([pt(x, y), pt(x + .5, y), pt(x + .5, y + .5), pt(x, y + .5)], `rgb(${g},${g},${g})`, `rgb(${g},${g},${g})`, .5);
    }
    for (let i = 0; i <= n; i++) poly(Array.from({ length: m + 1 }, (_, j) => pt(i, j)), null, '#1b1b1b', .8);
    for (let j = 0; j <= m; j++) poly(Array.from({ length: n + 1 }, (_, i) => pt(i, j)), null, '#1b1b1b', .8);
    const edge = [];
    for (let i = 0; i <= n; i++) edge.push(pt(i, 0));
    for (let j = 1; j <= m; j++) edge.push(pt(n, j));
    for (let i = n; i >= 0; i--) edge.push(pt(i, m));
    for (let j = m; j >= 0; j--) edge.push(pt(0, j));
    poly(edge, null, '#000', 2);
  }
  function spikes(q, n, m, up, down, seed, fx) {
    const pt = (i, j) => {
      const p = at(q, i / n, j / m), r = (noise(i * fx, j * .8, seed) - .5) * 2;
      return [p[0], p[1] - (r > 0 ? Math.pow(r, 1.7) * up : -Math.pow(-r, 1.4) * down)];
    };
    for (let j = 0; j < m; j++) {
      for (let i = 0; i < n; i++) {
        const g = 140 + hash(i, j, 99) * 60 | 0, c = `rgb(${g},${g - 3},${g - 6})`;
        poly([pt(i, j), pt(i + 1, j), pt(i + 1, j + 1), pt(i, j + 1)], c, c, .4);
        if (i % 2) poly([pt(i, j + 1), pt(i, j)], null, '#333', .5);
      }
      poly(Array.from({ length: n + 1 }, (_, i) => pt(i, j)), null, '#060606', j % 2 ? .7 : 1);
    }
    poly(Array.from({ length: n + 1 }, (_, i) => pt(i, m)), null, '#000', 1.8);
    poly(Array.from({ length: n + 1 }, (_, i) => pt(i, 0)), null, '#000', 1.5);
    poly(Array.from({ length: m + 1 }, (_, j) => pt(0, j)), null, '#000', 2.5);
    poly(Array.from({ length: m + 1 }, (_, j) => pt(n, j)), null, '#000', 1.8);
  }
  function contours(q, field, levels, amp, w) {
    const n = 150, val = [];
    for (let i = 0; i <= n; i++) { val.push([]); for (let j = 0; j <= n; j++) val[i].push(field(i / n, j / n)); }
    ctx.beginPath();
    for (const l of levels) for (let i = 0; i < n; i++) for (let j = 0; j < n; j++) {
      const c = [[i, j], [i + 1, j], [i + 1, j + 1], [i, j + 1]], hits = [];
      for (let k = 0; k < 4; k++) {
        const a = c[k], b = c[(k + 1) % 4], fa = val[a[0]][a[1]], fb = val[b[0]][b[1]];
        if ((fa < l) !== (fb < l)) {
          const t = (l - fa) / (fb - fa);
          const p = at(q, (a[0] + (b[0] - a[0]) * t) / n, (a[1] + (b[1] - a[1]) * t) / n);
          p[1] -= (l - .5) * amp;
          hits.push(p);
        }
      }
      if (hits.length >= 2) { ctx.moveTo(hits[0][0], hits[0][1]); ctx.lineTo(hits[1][0], hits[1][1]); }
    }
    ctx.strokeStyle = '#0a0a0a'; ctx.lineWidth = w; ctx.stroke();
  }
  // gentle ground broken by steep scarps, where the contour lines crowd together
  const terrace = (u, v) => {
    const a = smooth(u * 10, v * 9, 61), b = smooth(u * 7 + 3, v * 7, 73);
    return a * .34 + .66 / (1 + Math.exp((.62 - b) * 24));
  };
  function sections(q, rows, amp, seed) {
    const h = (u, v) => (smooth(u * 5 - v * 2, v * 7, seed) - .5) * amp;
    for (let j = 0; j <= rows; j++) {
      const line = [];
      for (let i = 0; i <= 100; i++) {
        const p = at(q, i / 100, j / rows);
        p[1] -= h(i / 100, j / rows);
        line.push(p);
      }
      poly(line, null, '#080808', .95);
    }
  }
  // small annotation seen from far away
  function caption(x, y, len) {
    ctx.fillStyle = '#4b5057';
    for (let k = 0; k < len; k += 2) if (rnd() > .25) ctx.fillRect(x + k, y - k * .15 + rnd(), 1.5, 1);
    for (let k = 0; k < len * .25; k += 2) ctx.fillRect(x + k, y + 3 - k * .15, 1, 1);
  }

  grid([389, 311, 642, 281, 690, 403, 406, 443], 28);
  texture([374, 257, 494, 243, 507, 295, 381, 309], (i, j) => {
    const r = Math.abs(smooth(i / 14, j / 9, 5) - .5), k = rnd();
    return r < .035 && k > .55 ? 235 : r < .05 && k < .2 ? 30 : 112 + noise(i / 3, j / 3, 8) * 30 + (k - .5) * 36;
  });
  texture([383, 317, 509, 301, 524, 354, 389, 372], (i, j) => 8 + Math.pow(smooth(i / 5, j / 3.6, 12), 2.2) * 150);
  mesh([500, 233, 619, 223, 638, 270, 514, 286], 17, 18, 8, 7, 3);
  mesh([519, 295, 644, 284, 664, 337, 533, 353], 17, 18, 9, 7, 4);
  poly([[517.7, 295], [532, 354]], null, '#2e9440', 2);
  poly([[533, 355], [665, 338.500]], null, '#c22b38', 1.500);
  spikes([633, 214, 739, 203, 752, 236, 645, 249], 80, 13, 20, 9, 6, .55);
  spikes([651, 264, 752, 251, 799, 302, 676, 315], 64, 12, 28, 24, 8, .5);
  poly([[760, 206], [869, 193], [897, 232], [790, 254]], '#000');
  poly([[793, 192], [793, 215]], null, '#000', 1.500);
  poly([[802, 193], [802, 215]], null, '#000', 1.500);
  poly([[866, 232], [873, 180], [880, 230]], '#aaa7a4', '#000', 1.500);
  spikes([797, 242, 912, 228, 942, 272, 817, 281], 50, 9, 52, 32, 14, .5);
  mesh([571, 480, 722, 463, 754, 540, 596, 566], 16, 17, 12, 6, 4);
  const xy = [752, 452, 896, 438, 941, 508, 791, 534];
  sections(xy, 50, 14, 12);
  const ridge = (u, v) => smooth(u * 5 - v * 2, v * 7, 12) + noise(u * 14, v * 10, 3) * .12;
  contours(xy, ridge, [.58, .6, .62], 12, 1.500);
  contours([800, 545, 948, 526, 1006, 612, 866, 646], (u, v) => smooth(u * 10, v * 9, 31), [.24, .36, .62, .76], 8, 1);
  contours([602, 587, 770, 571, 805, 658, 632, 694], terrace, Array.from({ length: 40 }, (_, k) => .03 + k * .024), 14, .95);

  poly([[1078, 382], [1108, 379], [1140, 373], [1160, 375], [1183, 367], [1200, 366], [1213, 371], [1220, 382], [1230, 385], [1246, 402], [1263, 417], [1270, 428], [1278, 435], [1273, 456], [1217, 467], [1202, 465], [1163, 475], [1137, 478], [1125, 462], [1110, 445], [1102, 433], [1093, 421], [1083, 411], [1077, 402]], '#000', '#000', 1);
  for (let k = 0; k < 34; k++) {
    const t = k / 34, x = 1142 + t * 134, y = 459 - t * 22 + Math.sin(k * .6);
    poly([[x, y], [x - 3, y + 17]], null, k % 5 === 3 ? '#5c5854' : '#aaa5a1', 2);
  }
  poly([[1140, 469], [1202, 455], [1275, 446]], null, '#000', 1);
  ctx.fillStyle = '#777';
  for (let k = 0; k < 60; k++) {
    const c = [[1105, 415], [1122, 422], [1135, 416], [1183, 412], [1169, 379], [1240, 422]][k % 6];
    ctx.fillRect(c[0] + rnd() * 14 - 7 | 0, c[1] + rnd() * 12 - 6 | 0, 1, 1);
  }

  caption(430, 381, 35);
  caption(578, 359, 62);
  caption(716, 340, 52);
  caption(856, 322, 46);
  caption(908, 215, 46);
})();
```
